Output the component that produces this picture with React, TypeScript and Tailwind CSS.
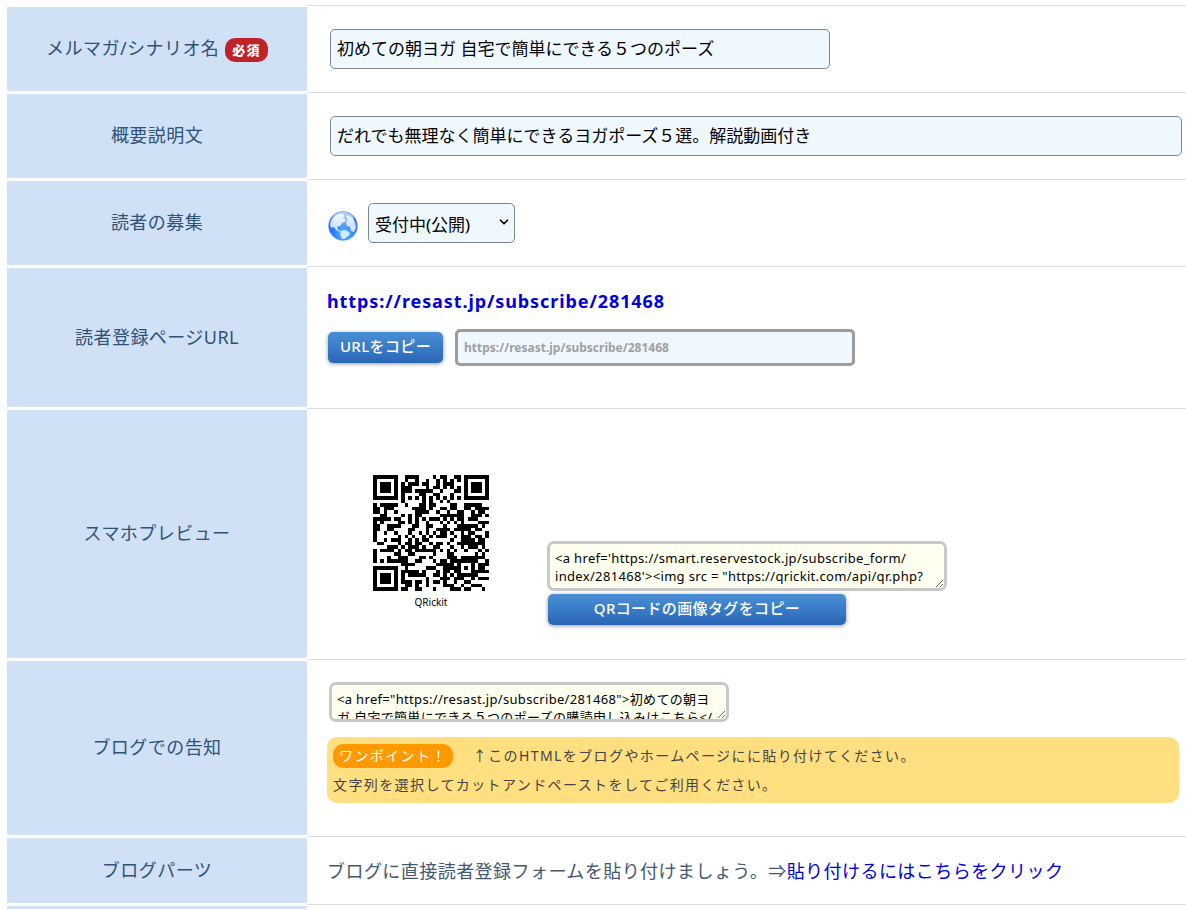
import { useMemo, useState } from 'react';
import type { ReactNode } from 'react';
import { ChevronDown } from 'lucide-react';

const SUBSCRIBE_URL = 'https://resast.jp/subscribe/281468';
const SMART_URL = 'https://smart.reservestock.jp/subscribe_form/index/281468';

const QR_TAG = `<a href='https://smart.reservestock.jp/subscribe_form/
index/281468'><img src = "https://qrickit.com/api/qr.php?
d=${SMART_URL}"></a>`;
const BLOG_TAG = `<a href="${SUBSCRIBE_URL}">初めての朝ヨ
ガ 自宅で簡単にできる５つのポーズの購読申し込みはこちら</
a>`;

// QR version 4, level M: 2 blocks of 32 data + 18 error correction bytes
const QR_SIZE = 33;
const BLOCK_DATA = 32;
const BLOCK_EC = 18;
const MASK = 2;

function gfMul(a: number, b: number) {
  let r = 0;
  for (let i = 7; i >= 0; i--) {
    r = (r << 1) ^ ((r >>> 7) * 0x11d);
    if ((b >>> i) & 1) r ^= a;
  }
  return r;
}

function errorBytes(data: number[]) {
  const gen: number[] = new Array(BLOCK_EC).fill(0);
  gen[BLOCK_EC - 1] = 1;
  let root = 1;
  for (let i = 0; i < BLOCK_EC; i++) {
    for (let j = 0; j < BLOCK_EC; j++) {
      gen[j] = gfMul(gen[j], root);
      if (j + 1 < BLOCK_EC) gen[j] ^= gen[j + 1];
    }
    root = gfMul(root, 2);
  }
  const rem: number[] = new Array(BLOCK_EC).fill(0);
  data.forEach((b) => {
    const factor = b ^ rem.shift()!;
    rem.push(0);
    gen.forEach((g, i) => (rem[i] ^= gfMul(g, factor)));
  });
  return rem;
}

function codewords(text: string) {
  let bits = '0100' + text.length.toString(2).padStart(8, '0');
  for (const ch of text) bits += ch.charCodeAt(0).toString(2).padStart(8, '0');
  bits += '0000';
  const data = (bits.match(/.{8}/g) ?? []).map((b) => parseInt(b, 2));
  for (let pad = 0xec; data.length < BLOCK_DATA * 2; pad ^= 0xec ^ 0x11) data.push(pad);
  const blocks = [data.slice(0, BLOCK_DATA), data.slice(BLOCK_DATA)];
  const ec = blocks.map(errorBytes);
  const out: number[] = [];
  for (let i = 0; i < BLOCK_DATA; i++) out.push(blocks[0][i], blocks[1][i]);
  for (let i = 0; i < BLOCK_EC; i++) out.push(ec[0][i], ec[1][i]);
  return out;
}

function qrMatrix(text: string) {
  const m: (boolean | null)[][] = Array.from({ length: QR_SIZE }, () => new Array(QR_SIZE).fill(null));
  const ring = (cx: number, cy: number, reach: number, dark: (d: number) => boolean) => {
    for (let y = -reach; y <= reach; y++)
      for (let x = -reach; x <= reach; x++)
        if (m[cy + y]?.[cx + x] !== undefined) m[cy + y][cx + x] = dark(Math.max(Math.abs(x), Math.abs(y)));
  };
  for (let i = 0; i < QR_SIZE; i++) m[6][i] = m[i][6] = i % 2 === 0;
  [[3, 3], [QR_SIZE - 4, 3], [3, QR_SIZE - 4]].forEach(([x, y]) => ring(x, y, 4, (d) => d !== 2 && d !== 4));
  ring(26, 26, 2, (d) => d !== 1);

  // format info, level M is 00
  let rem = MASK;
  for (let i = 0; i < 10; i++) rem = (rem << 1) ^ ((rem >>> 9) * 0x537);
  const format = ((MASK << 10) | rem) ^ 0x5412;
  const bit = (i: number) => ((format >>> i) & 1) === 1;
  for (let i = 0; i <= 5; i++) m[i][8] = bit(i);
  m[7][8] = bit(6);
  m[8][8] = bit(7);
  m[8][7] = bit(8);
  for (let i = 9; i < 15; i++) m[8][14 - i] = bit(i);
  for (let i = 0; i < 8; i++) m[8][QR_SIZE - 1 - i] = bit(i);
  for (let i = 8; i < 15; i++) m[QR_SIZE - 15 + i][8] = bit(i);
  m[QR_SIZE - 8][8] = true;

  const words = codewords(text);
  let k = 0;
  for (let right = QR_SIZE - 1; right >= 1; right -= 2) {
    if (right === 6) right = 5;
    for (let v = 0; v < QR_SIZE; v++) {
      for (let j = 0; j < 2; j++) {
        const x = right - j;
        const y = ((right + 1) & 2) === 0 ? QR_SIZE - 1 - v : v;
        if (m[y][x] !== null) continue;
        const dark = (((words[k >>> 3] ?? 0) >>> (7 - (k & 7))) & 1) === 1;
        m[y][x] = dark !== (x % 3 === 0);
        k++;
      }
    }
  }
  return m;
}

function QrCode({ text }: { text: string }) {
  const path = useMemo(
    () => qrMatrix(text).map((row, y) => row.map((on, x) => (on ? `M${x} ${y}h1v1h-1z` : '')).join('')).join(''),
    [text],
  );
  return (
    <svg viewBox="0 0 33 33" className="h-[116px] w-[116px]" shapeRendering="crispEdges" role="img" aria-label="QR">
      <path d={path} fill="#000" />
    </svg>
  );
}

function Globe() {
  return (
    <svg viewBox="0 0 30 30" className="mb-0.5 h-[30px] w-[30px]" aria-hidden="true">
      <defs>
        <radialGradient id="sea" cx="0.55" cy="0.75" r="0.8">
          <stop offset="0" stopColor="#5cc0ff" />
          <stop offset="0.45" stopColor="#2c80fa" />
          <stop offset="1" stopColor="#1a52dc" />
        </radialGradient>
        <linearGradient id="shine" x1="0" y1="0" x2="0" y2="1">
          <stop offset="0" stopColor="#fff" stopOpacity="0.75" />
          <stop offset="1" stopColor="#fff" stopOpacity="0.1" />
        </linearGradient>
      </defs>
      <circle cx="15" cy="15" r="14.5" fill="url(#sea)" stroke="#8ab6f5" strokeWidth="0.6" />
      <path
        d="M3 9 8 4l6-2 3 3-2 2 3 1-1 3-3 1-2 3-3 1 1 3 3 1-1 1-4-2-2-3-3 1-1-4zM13 20l4-1 4 2 1 2-3 3-3 2h-2l-2-5zM19 4l5 2 3 5 1 5-2 5-3-1-1-4-3-1-1-4 2-3-2-1z"
        fill="#e2f0ff"
        fillOpacity="0.9"
      />
      <ellipse cx="15" cy="8.5" rx="11" ry="7.5" fill="url(#shine)" />
    </svg>
  );
}

interface RowProps {
  label?: ReactNode;
  htmlFor?: string;
  className: string;
  children?: ReactNode;
}

function Row({ label, htmlFor, className, children }: RowProps) {
  return (
    <div className="flex">
      <div className="flex w-[300px] shrink-0 items-center justify-center border-t-2 border-b border-white bg-[#d0e0f5] pb-0.5 text-lg tracking-wide text-[#2f5277]">
        {htmlFor ? <label htmlFor={htmlFor}>{label}</label> : label}
      </div>
      <div className={`min-w-0 flex-1 border-t border-[#dcdcde] pr-[7px] pl-5 ${className}`}>{children}</div>
    </div>
  );
}

const field = 'h-10 rounded-[5px] border border-[#7d8792] bg-[#eff8ff] px-1.5 text-[17px] text-black';
const blueButton =
  'h-[31px] rounded-[5px] bg-linear-to-b from-[#4a90d6] to-[#2a66b6] pb-1 text-[15px] leading-5 font-medium tracking-wide text-white shadow-[0_1px_4px_rgba(0,0,0,0.4)]';
const codeBox =
  'block w-[400px] max-w-full resize overflow-hidden rounded-[7px] border-[3px] border-[#c8c8c8] bg-[#fffff0] px-[5px] pt-[5px] text-[13px] leading-[18px] tracking-wide text-black';

export default function App() {
  const [title, setTitle] = useState('初めての朝ヨガ 自宅で簡単にできる５つのポーズ');
  const [summary, setSummary] = useState('だれでも無理なく簡単にできるヨガポーズ５選。解説動画付き');
  const copy = (text: string) => navigator.clipboard?.writeText(text.replace(/\n/g, ''));

  return (
    <div className="bg-white pt-[5px] pl-[7px] font-['Noto_Sans','Noto_Sans_CJK_JP',sans-serif]">
      <Row
        htmlFor="title"
        className="py-[23px]"
        label={
          <span className="flex items-center gap-1.5">
            メルマガ/シナリオ名
            <span className="mt-1 rounded-[10px] bg-[#bd2328] px-[7px] text-[13px] leading-6 font-black tracking-widest text-white">
              必須
            </span>
          </span>
        }
      >
        <input id="title" className={`ml-[3px] block w-[500px] pb-1 ${field}`} value={title} onChange={(e) => setTitle(e.target.value)} />
      </Row>

      <Row label="概要説明文" htmlFor="summary" className="py-[23px]">
        <input id="summary" className={`ml-[3px] block w-full pb-1 ${field}`} value={summary} onChange={(e) => setSummary(e.target.value)} />
      </Row>

      <Row label="読者の募集" htmlFor="status" className="py-[23px]">
        <div className="flex items-end gap-2.5 pl-px">
          <Globe />
          <div className="relative">
            <select id="status" className={`w-[147px] appearance-none pt-1 ${field}`} defaultValue="open">
              <option value="open">受付中(公開)</option>
              <option value="private">受付中(非公開)</option>
              <option value="closed">受付終了</option>
            </select>
            <ChevronDown size={14} strokeWidth={3} className="pointer-events-none absolute top-3 right-1" />
          </div>
        </div>
      </Row>

      {/* Subscribe page URL */}
      <Row label="読者登録ページURL" htmlFor="url" className="pt-[22px] pb-[42px]">
        <a href={SUBSCRIBE_URL} className="block text-lg leading-6 font-bold tracking-wider text-[#0000dd]">
          {SUBSCRIBE_URL}
        </a>
        <div className="mt-4 flex items-center gap-3 pl-px">
          <button type="button" className={`w-[115px] ${blueButton}`} onClick={() => copy(SUBSCRIBE_URL)}>
            URLをコピー
          </button>
          <input
            id="url"
            disabled
            className="h-[37px] w-[400px] rounded-[5px] border-[3px] border-[#9c9c9c] bg-[#eff8ff] px-1.5 text-xs font-bold text-[#a0a0a0]"
            value={SUBSCRIBE_URL}
          />
        </div>
      </Row>

      {/* QR */}
      <Row label="スマホプレビュー" className="pt-[66px] pb-[34px]">
        <div className="flex items-end gap-[58px] pl-[46px]">
          <div className="flex flex-col items-center gap-1 pb-4">
            <QrCode text={SMART_URL} />
            <span className="text-[10px] leading-[14px] text-black">QRickit</span>
          </div>
          <div>
            <textarea aria-label="QR" className={`h-[50px] ${codeBox}`} defaultValue={QR_TAG} />
            <button type="button" className={`mt-[3px] ml-px w-[298px] ${blueButton}`} onClick={() => copy(QR_TAG)}>
              QRコードの画像タグをコピー
            </button>
          </div>
        </div>
      </Row>

      <Row label="ブログでの告知" htmlFor="blog-tag" className="pt-[22px] pb-[33px]">
        <textarea id="blog-tag" className={`ml-0.5 h-10 ${codeBox}`} defaultValue={BLOG_TAG} />
        <div className="mt-[15px] rounded-[10px] bg-[#ffdf80] px-1.5 py-1 text-sm leading-[29px] tracking-widest text-[#444]">
          <div className="flex items-center gap-5">
            <span className="rounded-[10px] bg-[#ff9900] px-1.5 leading-6 text-white">ワンポイント！</span>
            <span>↑このHTMLをブログやホームページにに貼り付けてください。</span>
          </div>
          <p>文字列を選択してカットアンドペーストをしてご利用ください。</p>
        </div>
      </Row>

      <Row
        label="ブログパーツ"
        className="py-5 font-['Noto_Sans_CJK_JP',sans-serif] text-lg leading-[27px] tracking-wide text-[#445870]"
      >
        ブログに直接読者登録フォームを貼り付けましょう。⇒
        <a href="#parts" className="text-[#0000dd]">
          貼り付けるにはこちらをクリック
        </a>
      </Row>

      <Row className="pt-[5px]" />
    </div>
  );
}
